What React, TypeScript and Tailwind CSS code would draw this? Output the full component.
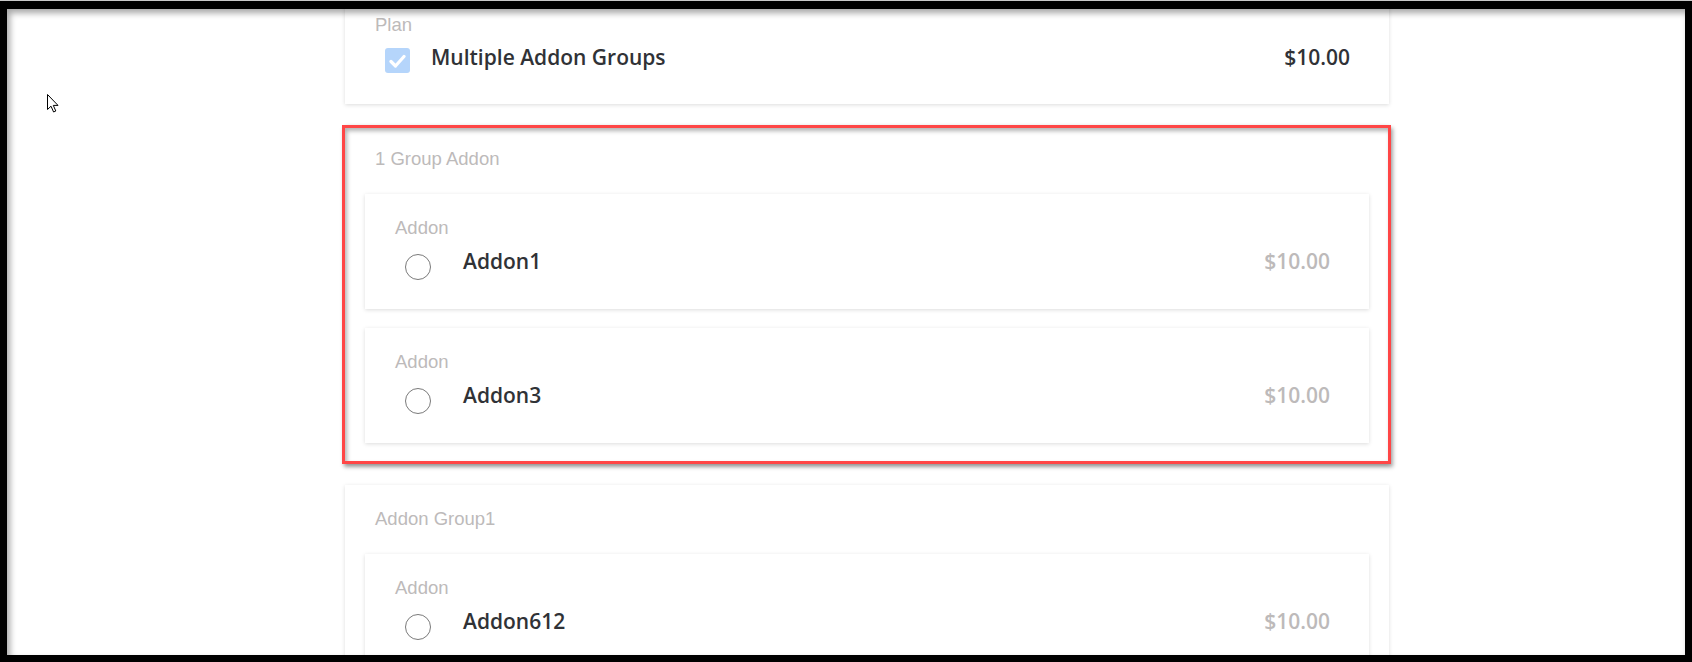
import React from "react";

type Addon = { name: string; price: string };
type Group = { title: string; highlighted?: boolean; addons: Addon[] };

const groups: Group[] = [
  {
    title: "1 Group Addon",
    highlighted: true,
    addons: [
      { name: "Addon1", price: "$10.00" },
      { name: "Addon3", price: "$10.00" },
    ],
  },
  {
    title: "Addon Group1",
    addons: [{ name: "Addon612", price: "$10.00" }],
  },
];

const label = "font-['Liberation_Sans',Arial,sans-serif] text-[18.5px] leading-[24px] text-[#bdbaba]";
const name = "font-['Open_Sans',sans-serif] font-semibold text-[21px] leading-[28px]";

const Radio = () => (
  <span className="mt-[7px] block h-[26px] w-[26px] shrink-0 rounded-full border-[1.5px] border-[#7a7a7a] bg-white" />
);

const AddonCard = ({ addon }: { addon: Addon }) => (
  <div className="bg-white pl-[30px] pr-[39px] pt-[22px] pb-[34px] shadow-[0_1px_4px_rgba(0,0,0,0.14)]">
    <div className={label}>Addon</div>
    <div className="mt-[7px] ml-[10px] flex h-[28px] items-start">
      <Radio />
      <span className={`${name} ml-[32px] text-[#303236]`}>{addon.name}</span>
      <span className={`${name} ml-auto text-[#bdbaba]`}>{addon.price}</span>
    </div>
  </div>
);

const GroupCard = ({ group }: { group: Group }) => (
  <div className="relative bg-white px-[20px] pt-[22px] pb-[21px] shadow-[0_1px_4px_rgba(0,0,0,0.14)]">
    <div className={`${label} px-[10px]`}>{group.title}</div>
    <div className="mt-[23px] flex flex-col gap-[19px]">
      {group.addons.map((a) => (
        <AddonCard key={a.name} addon={a} />
      ))}
    </div>
    {group.highlighted && (
      <div className="pointer-events-none absolute -left-[3px] -right-[2px] top-0 bottom-0 border-[3px] border-[#ff4646] shadow-[2px_3px_4px_rgba(0,0,0,0.35),inset_2px_3px_4px_rgba(0,0,0,0.3)]" />
    )}
  </div>
);

const Cursor = () => (
  <svg className="absolute left-[39px] top-[84px]" width="14" height="21" viewBox="0 0 14 21">
    <path
      d="M1.5 1.5 L1.5 16.5 L5 13.2 L7.6 19 L9.8 18 L7.3 12.4 L12 12.4 Z"
      fill="white"
      stroke="black"
      strokeWidth="1"
      strokeLinejoin="miter"
    />
  </svg>
);

export default function App() {
  return (
    <div className="flex h-[662px] w-full flex-col border-t border-[#c9c9c9] bg-black pt-[8px] pl-[7px] pr-[7px] pb-[7px]">
      <div className="relative flex-1 overflow-hidden bg-white">
        <div className="ml-[338px] -mt-[18px] flex w-[1044px] flex-col gap-[21px]">
          <div className="bg-white pl-[30px] pr-[39px] pt-[22px] pb-[33px] shadow-[0_1px_4px_rgba(0,0,0,0.14)]">
            <div className={label}>Plan</div>
            <div className="mt-[6px] ml-[10px] flex h-[28px] items-start">
              <span className="mt-[5px] flex h-[25px] w-[25px] shrink-0 items-center justify-center rounded-[3px] bg-[#b5d5fb]">
                <svg width="17" height="14" viewBox="0 0 17 14">
                  <path d="M2 7.5 L6.5 12 L15 2.5" fill="none" stroke="white" strokeWidth="3.2" strokeLinecap="round" strokeLinejoin="round" />
                </svg>
              </span>
              <span className={`${name} ml-[21px] text-[#303236]`}>Multiple Addon Groups</span>
              <span className={`${name} ml-auto text-[#303236]`}>$10.00</span>
            </div>
          </div>
          {groups.map((g) => (
            <GroupCard key={g.title} group={g} />
          ))}
        </div>
        <Cursor />
        <div className="pointer-events-none absolute inset-0 shadow-[inset_3px_4px_6px_rgba(0,0,0,0.35)]" />
      </div>
    </div>
  );
}
